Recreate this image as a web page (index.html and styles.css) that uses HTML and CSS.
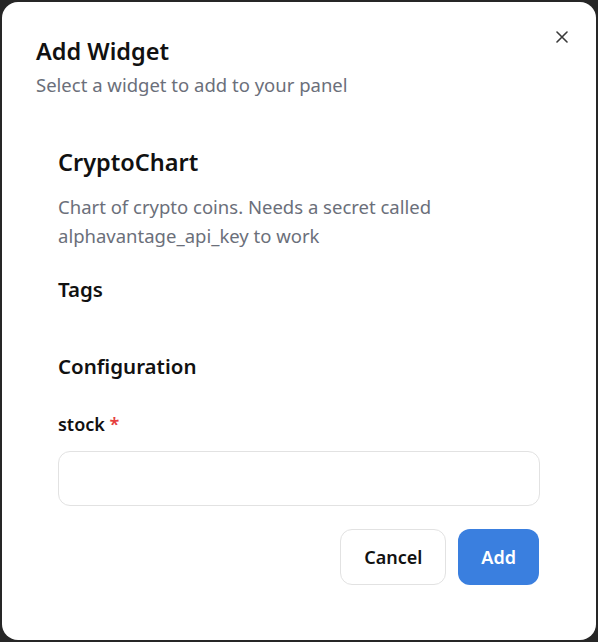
FILE: index.html
```html
<!DOCTYPE html>
<html lang="en">
<head>
    <meta charset="UTF-8">
    <meta name="viewport" content="width=device-width, initial-scale=1.0">
    <title>Add Widget</title>
    <link rel="stylesheet" href="styles.css">
</head>
<body>
    <div class="modal">
        <button class="close-btn" aria-label="Close">
            <svg width="12" height="12" viewBox="0 0 12 12">
                <path d="M1 1 L11 11 M11 1 L1 11" stroke="#3a3a3a" stroke-width="1.6" stroke-linecap="round"/>
            </svg>
        </button>
        <div class="modal-header">
            <h2 class="modal-title">Add Widget</h2>
            <p class="modal-subtitle">Select a widget to add to your panel</p>
        </div>
        <div class="modal-body">
            <h3 class="widget-name">CryptoChart</h3>
            <p class="widget-desc">Chart of crypto coins. Needs a secret called alphavantage_api_key to work</p>
            <h4 class="section-title tags-title">Tags</h4>
            <h4 class="section-title config-title">Configuration</h4>
            <label class="field-label" for="stock">stock <span class="required">*</span></label>
            <input type="text" id="stock" class="field-input">
        </div>
        <div class="modal-footer">
            <button class="btn btn-cancel">Cancel</button>
            <button class="btn btn-add">Add</button>
        </div>
    </div>
</body>
</html>
```
FILE: styles.css
```css
html, body {
    height: 100%;
}

body {
    margin: 0;
    padding: 2px;
    box-sizing: border-box;
    background-color: #262626;
    font-family: "Noto Sans", "Open Sans", sans-serif;
    color: #111;
}

.modal {
    position: relative;
    height: 100%;
    background-color: white;
    border-radius: 16px;
    display: flex;
    flex-direction: column;
}

.close-btn {
    position: absolute;
    top: 23px;
    right: 22px;
    width: 24px;
    height: 24px;
    padding: 0;
    border: none;
    background: none;
    display: flex;
    align-items: center;
    justify-content: center;
    cursor: pointer;
}

.modal-header {
    padding: 34px 34px 0 34px;
}

.modal-title {
    margin: 0;
    font-size: 23.5px;
    font-weight: 600;
    line-height: 30px;
}

.modal-subtitle {
    margin: 5px 0 0 0;
    font-size: 18.5px;
    line-height: 28px;
    color: #6b6f7a;
}

.modal-body {
    padding: 48px 56px 0 56px;
    display: flex;
    flex-direction: column;
}

.widget-name {
    margin: 0;
    font-size: 23.5px;
    font-weight: 600;
    line-height: 30px;
}

.widget-desc {
    margin: 15px 0 0 0;
    font-size: 18.5px;
    line-height: 29px;
    color: #6b6f7a;
}

.section-title {
    margin: 0;
    font-size: 20.5px;
    font-weight: 600;
    line-height: 28px;
}

.tags-title {
    margin-top: 25px;
}

.config-title {
    margin-top: 49px;
}

.field-label {
    margin-top: 31px;
    font-size: 18px;
    font-weight: 600;
    line-height: 26px;
}

.required {
    color: #e53e3e;
}

.field-input {
    margin-top: 14px;
    height: 55px;
    box-sizing: border-box;
    border: 1px solid #e2e2e2;
    border-radius: 12px;
    padding: 0 16px;
    font-size: 18px;
}

.modal-footer {
    display: flex;
    justify-content: flex-end;
    gap: 12px;
    padding: 23px 57px 0 56px;
}

.btn {
    height: 56px;
    padding: 0 23px;
    border-radius: 12px;
    font-family: "Noto Sans", "Open Sans", sans-serif;
    font-size: 18px;
    font-weight: 600;
    cursor: pointer;
}

.btn-cancel {
    background-color: white;
    border: 1px solid #e2e2e2;
    color: #111;
}

.btn-add {
    background-color: #3a7fdf;
    border: none;
    color: white;
}
```
